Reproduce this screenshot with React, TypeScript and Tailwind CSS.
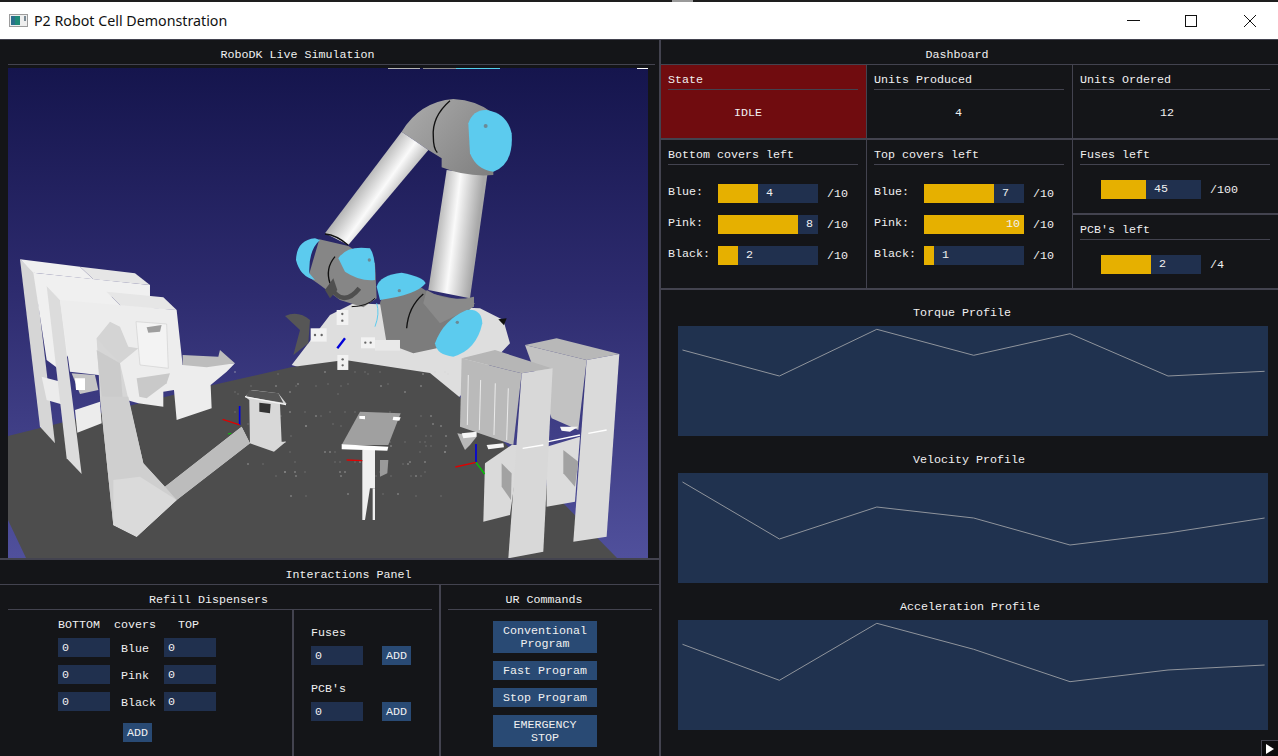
import type { ReactNode } from 'react';

const Line = ({ className = '' }: { className?: string }) => (
  <div className={`h-px bg-[#43434f] ${className}`} />
);

const Head = ({ title, className = '' }: { title: string; className?: string }) => (
  <div className={`flex h-[24px] items-center justify-center pt-[6px] ${className}`}>{title}</div>
);

const CellHead = ({ title }: { title: string }) => (
  <>
    <div className="flex h-[24px] items-center pt-[6px]">{title}</div>
    <Line />
  </>
);

const Bar = ({ value, max }: { value: number; max: number }) => {
  const pct = (value / max) * 100;
  return (
    <div className="relative h-[19px] w-[100px] bg-[#20304e]">
      <div className="h-full bg-[#e6b000]" style={{ width: `${pct}%` }} />
      <span
        className="absolute top-[2px]"
        style={{ left: `${Math.min(pct + 8, 100 - String(value).length * 7 - 4)}px` }}
      >
        {value}
      </span>
    </div>
  );
};

const BarRow = ({ label, value }: { label: string; value: number }) => (
  <div className="flex items-center">
    <div className="w-[50px] pb-[4px]">{label}</div>
    <Bar value={value} max={10} />
    <div className="ml-[9px]">/10</div>
  </div>
);

const Covers = ({ title, values }: { title: string; values: number[] }) => (
  <>
    <CellHead title={title} />
    <div className="mt-[19px] flex flex-col gap-[12px]">
      <BarRow label="Blue:" value={values[0]} />
      <BarRow label="Pink:" value={values[1]} />
      <BarRow label="Black:" value={values[2]} />
    </div>
  </>
);

const Single = ({ title, value, max }: { title: string; value: number; max: number }) => (
  <div className="h-[73px] bg-[#141518] pl-[7px] pr-[8px]">
    <CellHead title={title} />
    <div className="ml-[21px] mt-[15px] flex items-center">
      <Bar value={value} max={max} />
      <div className="ml-[9px]">/{max}</div>
    </div>
  </div>
);

const Input = () => (
  <div className="flex h-[19px] w-[52px] items-center bg-[#20304e] pl-[4px]">0</div>
);

const Btn = ({ children, className = '' }: { children: ReactNode; className?: string }) => (
  <div className={`flex items-center justify-center bg-[#294a74] pt-[2px] text-center leading-[13px] ${className}`}>
    {children}
  </div>
);

const Add = () => <Btn className="h-[19px] w-[29px]">ADD</Btn>;

const DispenserRow = ({ label }: { label: string }) => (
  <div className="flex items-center">
    <Input />
    <div className="w-[54px] pl-[11px] pt-[2px]">{label}</div>
    <Input />
  </div>
);

const PLOT_X = [4.5, 101.4, 198.8, 295.7, 392, 490, 586.6];

const charts = [
  { title: 'Torque Profile', titleClass: 'pl-[235px]', ys: [24, 50, 3.3, 29.3, 7.7, 50, 45.3] },
  { title: 'Velocity Profile', titleClass: 'pl-[235px]', ys: [9, 66, 34, 45, 72, 60, 45] },
  { title: 'Acceleration Profile', titleClass: 'pl-[222px]', ys: [24.3, 60.3, 3.3, 29.3, 61.7, 50, 45] },
];

const Plot = ({ ys }: { ys: number[] }) => (
  <svg viewBox="0 0 590 110" className="block h-[110px] w-[590px] bg-[#20324f]">
    <polyline
      points={ys.map((y, i) => `${PLOT_X[i]},${y}`).join(' ')}
      fill="none"
      stroke="#8f949c"
      strokeWidth="1"
    />
  </svg>
);

const dots = Array.from({ length: 120 }, (_, i) => ({
  x: 235 + ((i * i * 13 + i * 47) % 215),
  y: 372 + ((i * i * 7 + i * 83) % 130),
}));

const screws = [
  [187, 672], [187, 692], [105, 735], [125, 735], [256, 758], [272, 758], [188, 808], [188, 826],
];

// page coordinates: the viewBox starts where the picture sits in the window
const Scene = () => (
  <svg viewBox="8 68 640 490" className="block h-[490px] w-[640px]">
    <defs>
      <linearGradient id="sky" gradientUnits="userSpaceOnUse" x1="0" y1="68" x2="0" y2="558">
        <stop offset="0" stopColor="#15154d" />
        <stop offset="0.45" stopColor="#2d2b6e" />
        <stop offset="1" stopColor="#50509c" />
      </linearGradient>
      <linearGradient id="tubeA" gradientUnits="userSpaceOnUse" x1="250" y1="270" x2="335" y2="330">
        <stop offset="0" stopColor="#b4b4b4" />
        <stop offset="0.6" stopColor="#fafafa" />
        <stop offset="1" stopColor="#c4c4c4" />
      </linearGradient>
      <linearGradient id="tubeB" gradientUnits="userSpaceOnUse" x1="465" y1="420" x2="590" y2="435">
        <stop offset="0" stopColor="#b0b0b0" />
        <stop offset="0.45" stopColor="#fafafa" />
        <stop offset="1" stopColor="#a8a8a8" />
      </linearGradient>
      <linearGradient id="joint" gradientUnits="userSpaceOnUse" x1="300" y1="0" x2="620" y2="260">
        <stop offset="0" stopColor="#b5b5b5" />
        <stop offset="1" stopColor="#808080" />
      </linearGradient>
    </defs>
    <rect x="8" y="68" width="640" height="490" fill="url(#sky)" />
    <rect x="388" y="68" width="32" height="1" fill="#b5b5b5" />
    <rect x="423" y="68" width="33" height="1" fill="#8f8f8f" />
    <rect x="456" y="68" width="44" height="1" fill="#54d0ea" />
    <rect x="637" y="68" width="11" height="1" fill="#ffffff" />

    {/* robot base plate */}
    <g transform="translate(280 90) scale(0.3333)">
      <polygon points="35,825 150,675 220,640 600,655 670,690 690,760 534,925 430,850 250,820 180,870" fill="#dedede" />
      <polygon points="655,688 680,685 672,706" fill="#111111" />
    </g>

    <polygon
      points="8,436 213,385 292,367 345,360 430,373 463,400 563,503 617,558 26,558 8,520"
      fill="#4d4d4d"
    />
    {dots.map((d, i) => (
      <circle key={i} cx={d.x} cy={d.y} r="0.7" fill="#c9c9c9" opacity={i % 3 === 0 ? 0.8 : 0.35} />
    ))}

    {/* left dispensers, page = 0,250 + zoomed / 3 */}
    <g transform="translate(0 250) scale(0.3333)">
      <polygon points="60,28 105,68 165,580 120,530" fill="#d6d6d6" />
      <polygon points="60,28 240,50 280,88 100,68" fill="#f0f0f0" />
      <polygon points="240,50 405,70 450,105 280,88" fill="#e6e6e6" />
      <polygon points="100,68 450,105 450,140 300,140 180,360 140,330" fill="#f0f0f0" />
      <polygon points="125,380 200,400 210,470 140,450" fill="#ececec" />
      <polygon points="225,480 300,455 305,520 232,548" fill="#ececec" />
      <polygon points="140,108 180,150 245,672 200,625" fill="#dcdcdc" />
      <polygon points="140,108 320,125 365,170 180,150" fill="#f0f0f0" />
      <polygon points="320,125 490,142 530,180 365,170" fill="#e6e6e6" />
      <polygon points="180,150 530,180 548,345 705,340 680,365 632,405 635,475 530,510 522,420 490,425 490,470 415,460 345,440 340,380 210,365" fill="#ededed" />
      <polygon points="548,315 655,320 660,300 705,340 620,352 548,345" fill="#bdbdbd" />
      <polygon points="408,215 500,222 505,355 420,345" fill="#f3f3f3" stroke="#d0d0d0" strokeWidth="2" />
      <polygon points="440,232 485,225 480,245 445,248" fill="#9e9e9e" />
      <polygon points="215,370 285,375 295,420 240,432" fill="#c5c5c5" />
      <polygon points="225,385 255,385 255,420 228,420" fill="#ffffff" />
      <polygon points="410,385 510,370 500,400 440,445 418,440" fill="#c9c9c9" />
      <polygon points="290,265 330,215 360,230 385,290 415,295 360,340 300,340" fill="#d4d4d4" />
      <polygon points="290,265 360,340 430,640 495,710 725,530 750,580 530,750 410,860 340,825 300,440" fill="#d6d6d6" />
      <polygon points="290,300 360,340 368,445 305,440" fill="#cbcbcb" />
      <polygon points="300,440 385,440 430,640 530,750 410,860 340,825" fill="#cfcfcf" />
      <polygon points="340,690 420,680 530,750 410,860 340,825" fill="#dadada" />
      <polygon points="495,710 725,530 750,580 530,750" fill="#bcbcbc" />
      <polygon points="748,450 735,440 755,420 835,430 860,462 840,462 845,575 858,575 822,605 750,580" fill="#d8d8d8" />
      <polygon points="748,420 835,430 850,458 738,440" fill="#555555" />
      <polygon points="735,438 858,462 858,466 735,442" fill="#f4f4f4" />
      <polygon points="778,458 812,462 810,490 778,485" fill="#333333" />
      <line x1="719" y1="525" x2="719" y2="468" stroke="#0000e0" strokeWidth="5" />
      <line x1="719" y1="525" x2="668" y2="508" stroke="#e00000" strokeWidth="4" />
      <line x1="684" y1="552" x2="694" y2="550" stroke="#00cc00" strokeWidth="3" />
    </g>

    {/* robot arm, page = 280,90 + zoomed / 3 */}
    <g transform="translate(280 90) scale(0.3333)">
      <path d="M300 640 Q300 610 420 590 L450 610 L585 640 L470 775 L400 790 L320 760 Z" fill="#7c7c7c" />
      <polygon points="500,240 622,255 570,625 445,600" fill="url(#tubeB)" />
      <path d="M440 600 Q505 640 582 620 L582 650 L480 700 L430 640 Z" fill="#8a8a8a" />
      <path d="M365 125 Q420 35 520 27 Q590 30 640 70 L640 255 Q560 262 485 232 L485 205 L445 180 Z" fill="url(#joint)" />
      <polygon points="135,430 365,125 445,180 205,465" fill="url(#tubeA)" />
      <path d="M510 32 Q455 80 460 140 Q460 175 472 188" fill="none" stroke="#111111" strokeWidth="4" />
      <path d="M135 432 Q170 435 205 466" fill="none" stroke="#111111" strokeWidth="4" />
      <path d="M565 100 Q580 58 620 60 Q682 70 695 130 Q702 222 640 245 Q590 240 570 190 Z" fill="#5ccbee" />
      <circle cx="617" cy="108" r="6" fill="#6b8a96" />
      <polygon points="118,448 205,468 285,520 290,625 250,652 180,630 120,585 85,560" fill="#868686" />
      <path d="M48 510 Q50 450 105 445 L120 450 Q85 480 88 550 L105 570 Q60 560 48 510 Z" fill="#5ccbee" />
      <path d="M175 505 Q200 465 270 475 Q288 500 285 570 Q240 575 195 545 Z" fill="#5ccbee" />
      <circle cx="268" cy="510" r="5" fill="#6b8a96" />
      <path d="M165 500 Q135 535 150 580" fill="none" stroke="#111111" strokeWidth="4" />
      <path d="M215 650 Q260 650 285 625" fill="none" stroke="#111111" strokeWidth="3" />
      <path d="M290 590 Q300 555 365 548 Q430 560 437 580 Q410 615 300 630 Z" fill="#5ccbee" />
      <circle cx="358" cy="602" r="5" fill="#6b8a96" />
      <path d="M430 612 Q385 650 380 715" fill="none" stroke="#111111" strokeWidth="4" />
      <path d="M290 640 Q300 670 285 710" fill="none" stroke="#5ccbee" strokeWidth="3" />
      <path d="M465 760 Q490 690 560 660 Q605 655 607 700 Q590 780 520 800 Q470 795 465 760 Z" fill="#5ccbee" />
      <circle cx="532" cy="697" r="5" fill="#6b8a96" />
      <path d="M150 590 Q190 655 238 595" fill="none" stroke="#4f4f4f" strokeWidth="14" />
      <polygon points="135,600 160,565 172,600 150,625" fill="#4f4f4f" />
      <path d="M15 678 Q55 660 90 690 L85 760 L40 795 L60 720 Z" fill="#565656" />
      <rect x="170" y="660" width="35" height="45" fill="#f2f2f2" />
      <rect x="92" y="715" width="48" height="40" fill="#f2f2f2" />
      <rect x="243" y="742" width="42" height="33" fill="#f2f2f2" />
      <rect x="285" y="750" width="75" height="32" fill="#e9e9e9" />
      <rect x="172" y="795" width="33" height="45" fill="#f2f2f2" />
      {screws.map(([x, y]) => (
        <circle key={`${x}-${y}`} cx={x} cy={y} r="3.5" fill="#666666" />
      ))}
      <line x1="195" y1="745" x2="172" y2="775" stroke="#0000d8" strokeWidth="7" />
    </g>

    {/* table and right dispensers, page = 330,330 + zoomed / 3 */}
    <g transform="translate(330 330) scale(0.3333)">
      <polygon points="97,360 135,360 135,475 120,475 105,570 97,570" fill="#efefef" />
      <polygon points="128,475 135,475 135,570 128,570" fill="#efefef" />
      <polygon points="150,390 175,390 172,430 150,440" fill="#9a9a9a" />
      <polygon points="90,245 212,250 175,345 35,345" fill="#a0a0a0" />
      <polygon points="35,343 175,350 172,362 35,358" fill="#ffffff" />
      <polygon points="88,258 105,258 105,268 88,266" fill="#ffffff" />
      <polygon points="190,260 212,262 208,272 188,270" fill="#ffffff" />
      <line x1="50" y1="390" x2="97" y2="392" stroke="#e00000" strokeWidth="4" />

      <polygon points="585,45 680,25 868,72 770,90" fill="#b8b8b8" />
      <polygon points="585,45 770,90 745,300 665,265" fill="#c2c2c2" />
      <polygon points="770,90 868,72 830,620 730,635" fill="#dadada" />
      <polygon points="650,350 750,320 735,515 650,530" fill="#dcdcdc" />
      <polygon points="700,360 745,395 735,470 700,430" fill="#a2a2a2" />
      <polygon points="395,85 495,60 665,115 575,130" fill="#b6b6b6" />
      <polygon points="395,85 575,130 550,345 390,290" fill="#bababa" />
      <line x1="415" y1="135" x2="412" y2="285" stroke="#ebebeb" strokeWidth="3" />
      <line x1="452" y1="150" x2="448" y2="300" stroke="#ebebeb" strokeWidth="3" />
      <line x1="496" y1="160" x2="492" y2="315" stroke="#ebebeb" strokeWidth="3" />
      <line x1="535" y1="175" x2="530" y2="330" stroke="#ebebeb" strokeWidth="3" />
      <polygon points="465,400 545,345 570,345 540,555 460,575" fill="#dadada" />
      <polygon points="515,400 545,430 543,510 515,470" fill="#a2a2a2" />
      <polygon points="575,130 668,115 640,665 535,685" fill="#d8d8d8" />
      <polygon points="382,310 440,320 420,345 405,360 395,340" fill="#b8b8b8" />
      <polygon points="395,310 440,305 440,320 400,325" fill="#f6f6f6" />
      <polygon points="470,345 520,340 522,352 475,358" fill="#f6f6f6" />
      <polygon points="690,290 745,290 720,305 695,302" fill="#f6f6f6" />
      <line x1="578" y1="355" x2="640" y2="345" stroke="#ffffff" strokeWidth="4" />
      <line x1="655" y1="335" x2="750" y2="315" stroke="#ffffff" strokeWidth="4" />
      <line x1="775" y1="310" x2="830" y2="300" stroke="#ffffff" strokeWidth="4" />
      <line x1="438" y1="397" x2="438" y2="342" stroke="#0000e0" strokeWidth="5" />
      <line x1="438" y1="397" x2="376" y2="411" stroke="#e00000" strokeWidth="4" />
      <line x1="438" y1="397" x2="464" y2="432" stroke="#00c800" strokeWidth="4" />
    </g>
  </svg>
);

export default function App() {
  return (
    <div className="flex h-[756px] w-[1278px] flex-col overflow-hidden bg-white font-['Liberation_Mono',monospace] text-[11.67px] leading-[14px] text-[#f0f0f0]">
      <div className="h-[2px] bg-[#1e1e1e] pl-[672px]">
        <div className="h-full w-[21px] bg-[#9a9a9a]" />
      </div>

      {/* window title bar */}
      <div className="flex h-[37px] items-center bg-white pl-[9px] font-['Noto_Sans',sans-serif] text-[14.25px] text-[#111111]">
        <svg viewBox="0 0 19 13" className="h-[13px] w-[19px]">
          <rect x="0.5" y="0.5" width="18" height="12" fill="#eeeeee" stroke="#9c9c9c" />
          <rect x="2" y="2" width="9" height="9" fill="#1f8a78" />
          <rect x="2" y="2" width="4" height="9" fill="#2b6f8c" />
          <rect x="15" y="2" width="2" height="5" fill="#7a8a94" />
        </svg>
        <div className="ml-[6px]">P2 Robot Cell Demonstration</div>
        <svg viewBox="0 0 130 14" className="ml-[900px] h-[14px] w-[130px]" stroke="#111111" fill="none">
          <line x1="0" y1="6.5" x2="13" y2="6.5" />
          <rect x="58.5" y="1.5" width="11" height="11" />
          <line x1="117" y1="1" x2="129" y2="13" />
          <line x1="129" y1="1" x2="117" y2="13" />
        </svg>
      </div>

      <div className="flex h-[717px] border-t border-[#43434f] bg-[#141518]">
        {/* left column */}
        <div className="flex w-[659px] flex-col">
          <div className="h-[518px] px-[8px]">
            <Head title="RoboDK Live Simulation" className="pr-[64px]" />
            <Line className="mr-[-4px]" />
            <div className="mt-[3px]">
              <Scene />
            </div>
          </div>
          <div className="h-[2px] bg-[#43434f]" />
          <Head title="Interactions Panel" className="pl-[38px]" />
          <Line />
          <div className="flex flex-1">
            <div className="flex w-[441px] flex-col border-r-2 border-[#43434f]">
              <Head title="Refill Dispensers" className="pr-[22px]" />
              <Line className="ml-[8px] mr-[7px]" />
              <div className="flex flex-1">
                <div className="w-[294px] border-r-2 border-[#43434f] pl-[58px]">
                  <div className="mt-[8px] flex h-[14px]">
                    <span>BOTTOM</span>
                    <span className="ml-[14px]">covers</span>
                    <span className="ml-[22px]">TOP</span>
                  </div>
                  <div className="mt-[6px] flex flex-col gap-[8px]">
                    <DispenserRow label="Blue" />
                    <DispenserRow label="Pink" />
                    <DispenserRow label="Black" />
                  </div>
                  <div className="ml-[65px] mt-[12px]">
                    <Add />
                  </div>
                </div>
                <div className="pl-[17px]">
                  <div className="mt-[16px] h-[14px]">Fuses</div>
                  <div className="mt-[6px] flex gap-[19px]">
                    <Input />
                    <Add />
                  </div>
                  <div className="mt-[17px] h-[14px]">PCB's</div>
                  <div className="mt-[6px] flex gap-[19px]">
                    <Input />
                    <Add />
                  </div>
                </div>
              </div>
            </div>
            <div className="flex-1">
              <Head title="UR Commands" className="pr-[12px]" />
              <Line className="ml-[7px] mr-[7px]" />
              <div className="ml-[52px] mt-[11px] flex flex-col gap-[8px]">
                <Btn className="h-[32px] w-[104px]">Conventional<br />Program</Btn>
                <Btn className="h-[19px] w-[104px]">Fast Program</Btn>
                <Btn className="h-[19px] w-[104px]">Stop Program</Btn>
                <Btn className="h-[32px] w-[104px]">EMERGENCY<br />STOP</Btn>
              </div>
            </div>
          </div>
        </div>

        {/* dashboard */}
        <div className="relative flex w-[619px] flex-col border-l-2 border-[#43434f]">
          <Head title="Dashboard" className="pr-[25px]" />
          <div className="grid grid-cols-[205px_205px_205px] grid-rows-[73px_148px] gap-x-[1px] gap-y-[2px] bg-[#43434f] pb-[2px] pt-[1px]">
            <div className="bg-[#700c0f] pl-[7px] pr-[8px]">
              <div className="flex h-[24px] items-center pt-[6px]">State</div>
              <Line className="bg-[#8f3a3d]" />
              <div className="mt-[16px] pl-[66px]">IDLE</div>
            </div>
            <div className="bg-[#141518] pl-[7px] pr-[8px]">
              <CellHead title="Units Produced" />
              <div className="mt-[16px] pl-[81px]">4</div>
            </div>
            <div className="bg-[#141518] pl-[7px] pr-[8px]">
              <CellHead title="Units Ordered" />
              <div className="mt-[16px] pl-[80px]">12</div>
            </div>
            <div className="bg-[#141518] pl-[7px] pr-[8px]">
              <Covers title="Bottom covers left" values={[4, 8, 2]} />
            </div>
            <div className="bg-[#141518] pl-[7px] pr-[8px]">
              <Covers title="Top covers left" values={[7, 10, 1]} />
            </div>
            <div className="flex flex-col gap-[2px]">
              <Single title="Fuses left" value={45} max={100} />
              <Single title="PCB's left" value={2} max={4} />
            </div>
          </div>
          <div className="flex flex-col gap-[17px] pl-[17px] pt-[16px]">
            {charts.map((c) => (
              <div key={c.title}>
                <div className={`mb-[6px] h-[14px] ${c.titleClass}`}>{c.title}</div>
                <Plot ys={c.ys} />
              </div>
            ))}
          </div>
          <div className="absolute bottom-0 right-0 flex h-[16px] w-[17px] items-center justify-center border-l border-t border-[#43434f] bg-[#0c0c0e]">
            <svg viewBox="0 0 10 12" className="h-[12px] w-[10px]">
              <polygon points="1,1 9,6 1,11" fill="#ffffff" />
            </svg>
          </div>
        </div>
      </div>
    </div>
  );
}
